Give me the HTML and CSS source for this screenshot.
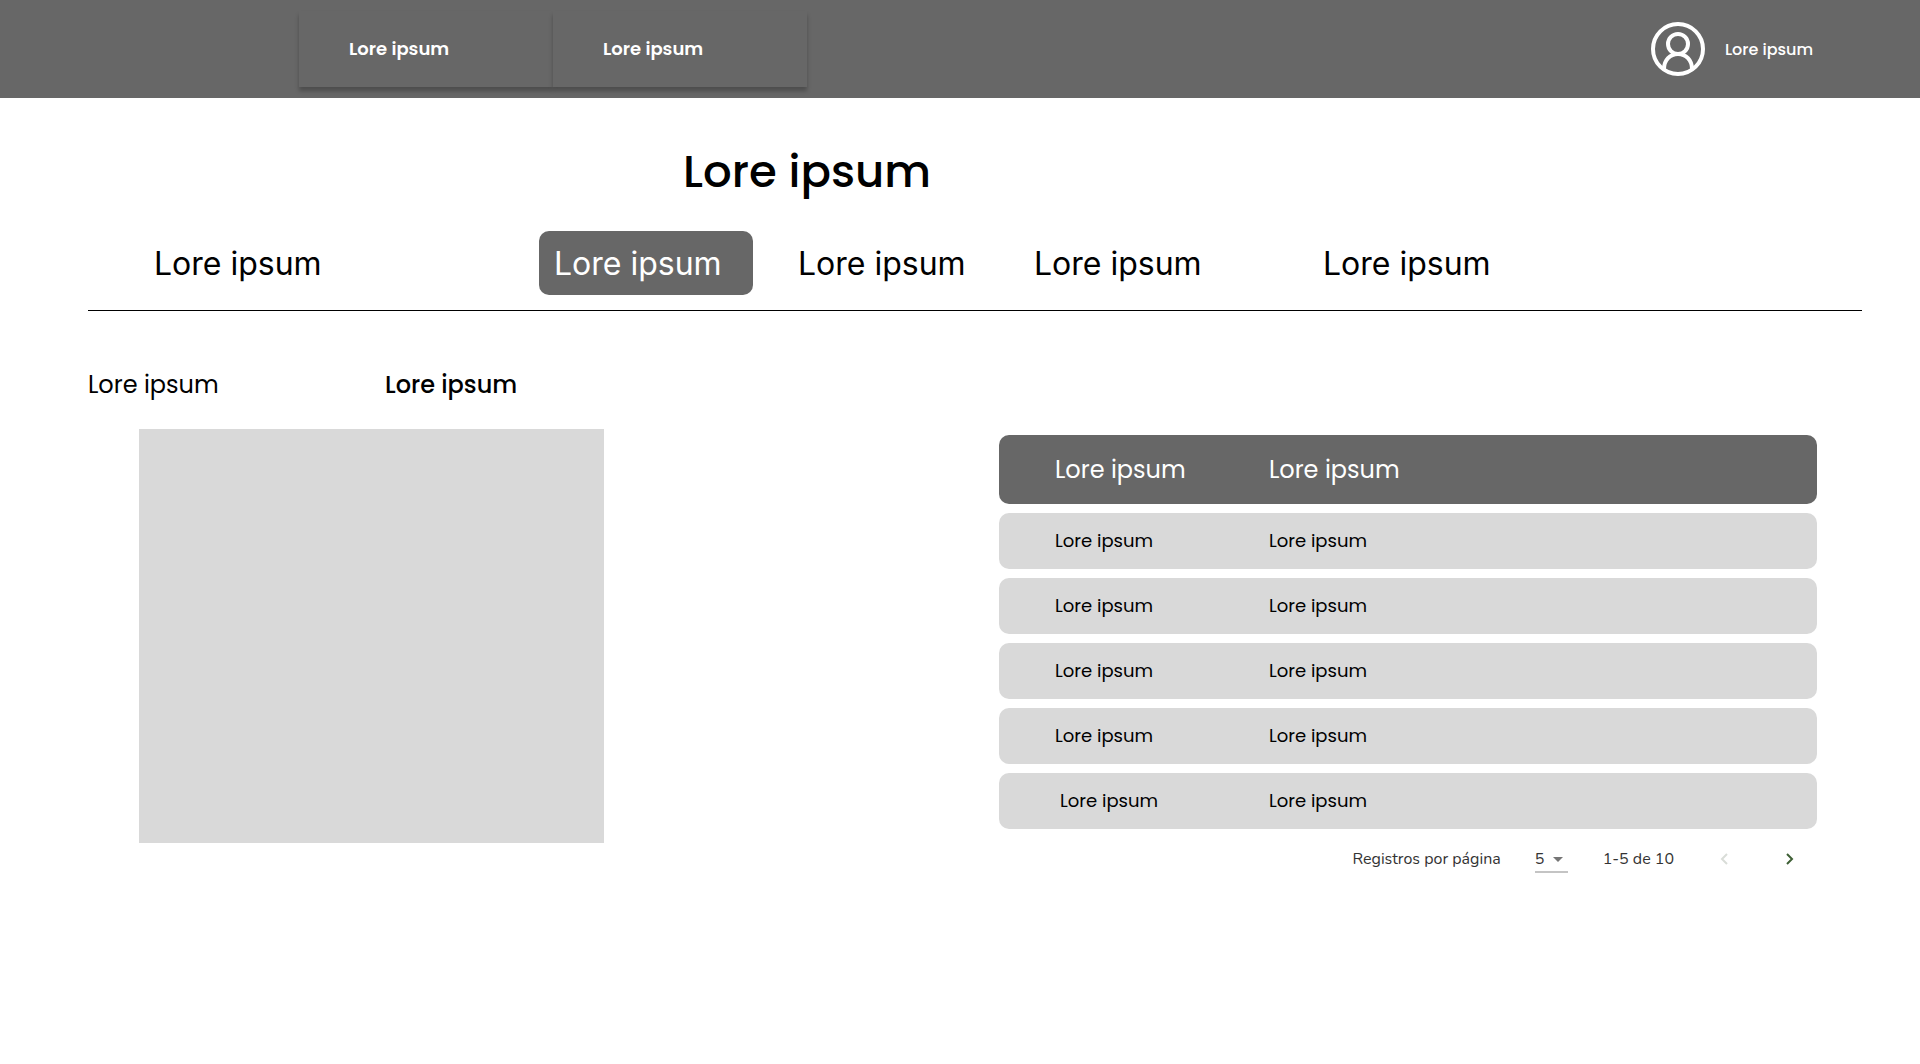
FILE: index.html
```html
<!DOCTYPE html>
<html lang="es">
<head>
<meta charset="utf-8">
<meta name="viewport" content="width=device-width, initial-scale=1">
<title>Lore ipsum</title>
<link rel="stylesheet" href="styles.css">
</head>
<body>
<header class="topbar">
  <nav class="topnav">
    <a class="topnav-link" href="#">Lore ipsum</a>
    <a class="topnav-link" href="#">Lore ipsum</a>
  </nav>
  <a class="user" href="#">
    <svg class="user-icon" viewBox="0 0 54 54" fill="none" stroke="currentColor" stroke-width="4" aria-hidden="true">
      <circle cx="27" cy="27" r="25"/>
      <circle cx="27" cy="22" r="10"/>
      <path d="M13 47C13 38 19 32 27 32S41 38 41 47"/>
    </svg>
    <span>Lore ipsum</span>
  </a>
</header>
<main>
  <h1 class="title">Lore ipsum</h1>
  <nav class="tabs">
    <a class="tab" href="#">Lore ipsum</a>
    <a class="tab tab-active" href="#" aria-current="page">Lore ipsum</a>
    <a class="tab" href="#">Lore ipsum</a>
    <a class="tab" href="#">Lore ipsum</a>
    <a class="tab" href="#">Lore ipsum</a>
  </nav>
  <div class="content">
    <section class="summary">
      <div class="field">
        <span>Lore ipsum</span>
        <strong class="field-value">Lore ipsum</strong>
      </div>
      <div class="panel"></div>
    </section>
    <section class="records">
      <table class="table">
        <thead>
          <tr><th scope="col">Lore ipsum</th><th scope="col">Lore ipsum</th></tr>
        </thead>
        <tbody>
          <tr><td>Lore ipsum</td><td>Lore ipsum</td></tr>
          <tr><td>Lore ipsum</td><td>Lore ipsum</td></tr>
          <tr><td>Lore ipsum</td><td>Lore ipsum</td></tr>
          <tr><td>Lore ipsum</td><td>Lore ipsum</td></tr>
          <tr><td class="indented">Lore ipsum</td><td>Lore ipsum</td></tr>
        </tbody>
      </table>
      <div class="pager">
        <label for="page-size">Registros por página</label>
        <span class="select">
          <select id="page-size"><option>5</option><option>10</option></select>
          <svg class="caret" viewBox="0 0 10 5" aria-hidden="true"><path d="M0 0h10L5 5z" fill="currentColor"/></svg>
        </span>
        <span class="range">1-5 de 10</span>
        <button class="step" type="button" disabled aria-label="Página anterior">
          <svg viewBox="0 0 8 12" fill="none" stroke="currentColor" stroke-width="2"><path d="M7 1L2 6L7 11"/></svg>
        </button>
        <button class="step" type="button" aria-label="Página siguiente">
          <svg viewBox="0 0 8 12" fill="none" stroke="currentColor" stroke-width="2"><path d="M1 1L6 6L1 11"/></svg>
        </button>
      </div>
    </section>
  </div>
</main>
</body>
</html>
```
FILE: styles.css
```css
* {
  box-sizing: border-box;
}

body {
  margin: 0;
  background: #fff;
  color: #000;
  font-family: Poppins, Inter, sans-serif;
}

a {
  color: inherit;
  text-decoration: none;
}

.topbar {
  display: grid;
  grid-template-columns: 299fr 508fr 844fr 269fr;
  height: 98px;
  background: #676767;
  color: #fff;
}

.topnav {
  grid-column: 2;
  display: grid;
  grid-template-columns: 1fr 1fr;
  margin: 11px 0;
}

.topnav-link {
  display: flex;
  align-items: center;
  padding: 0 0 2px 50px;
  background: #676767;
  box-shadow: 0 4px 4px rgba(0, 0, 0, 0.25);
  font-size: 18px;
  font-weight: 600;
}

.user {
  grid-column: 4;
  display: flex;
  align-items: center;
  gap: 20px;
  font-size: 16px;
  font-weight: 500;
}

.user-icon {
  width: 54px;
  height: 54px;
}

.title {
  margin: 39px 0 24px;
  padding-right: 306px;
  font-size: 45px;
  font-weight: 500;
  line-height: 70px;
  text-align: center;
}

.tabs {
  display: grid;
  grid-template-columns: 451fr 244fr 236fr 289fr 554fr;
  margin: 0 58px 0 88px;
  padding-bottom: 15px;
  border-bottom: 1px solid #000;
  font-family: Inter, sans-serif;
  font-size: 32px;
  line-height: 62px;
}

.tab {
  justify-self: start;
  padding: 2px 15px 0;
}

.tab:first-child {
  padding-left: 66px;
}

.tab-active {
  padding-right: 31px;
  border-radius: 10px;
  background: #676767;
  color: #fff;
}

.content {
  display: grid;
  grid-template-columns: 911fr 818fr;
  margin: 0 103px 0 88px;
}

.summary {
  padding-top: 56px;
}

.field {
  display: grid;
  grid-template-columns: 297fr 614fr;
  font-size: 24px;
  line-height: 36px;
}

.field-value {
  font-weight: 500;
}

.panel {
  width: 51%;
  height: 414px;
  margin: 26px 0 0 51px;
  background: #d9d9d9;
}

.records {
  padding-top: 115px;
}

.table {
  width: 100%;
  border-collapse: separate;
  border-spacing: 0 9px;
  table-layout: fixed;
}

.table th,
.table td {
  height: 56px;
  padding: 0 0 2px 56px;
  background: #d9d9d9;
  font-size: 18px;
  font-weight: 400;
  text-align: left;
}

.table th {
  height: 69px;
  padding-bottom: 0;
  background: #676767;
  color: #fff;
  font-size: 24px;
}

.table th:first-child {
  width: 33%;
}

.table tr > :first-child {
  border-radius: 10px 0 0 10px;
}

.table tr > :last-child {
  padding-left: 0;
  border-radius: 0 10px 10px 0;
}

.table .indented {
  padding-left: 61px;
}

.pager {
  display: flex;
  justify-content: flex-end;
  align-items: center;
  height: 42px;
  padding-right: 15px;
  color: #333;
  font-family: Nunito, "Noto Sans", sans-serif;
  font-size: 16px;
}

.select {
  position: relative;
  width: 33px;
  margin: 0 35px 0 34px;
  border-bottom: 2px solid #c4c4c4;
}

.select select {
  display: block;
  width: 100%;
  height: 26px;
  padding: 2px 0 0;
  border: 0;
  appearance: none;
  background: transparent;
  color: inherit;
  font: inherit;
}

.caret {
  position: absolute;
  top: 12px;
  right: 5px;
  width: 10px;
  height: 5px;
  color: #757575;
  pointer-events: none;
}

.range {
  margin-right: 38px;
}

.step {
  display: grid;
  place-items: center;
  width: 24px;
  height: 24px;
  margin-left: 42px;
  padding: 0;
  border: 0;
  background: none;
  color: #3e5f35;
}

.step:disabled {
  margin-left: 0;
  color: #d9ddd8;
}

.step svg {
  width: 8px;
  height: 12px;
}
```
